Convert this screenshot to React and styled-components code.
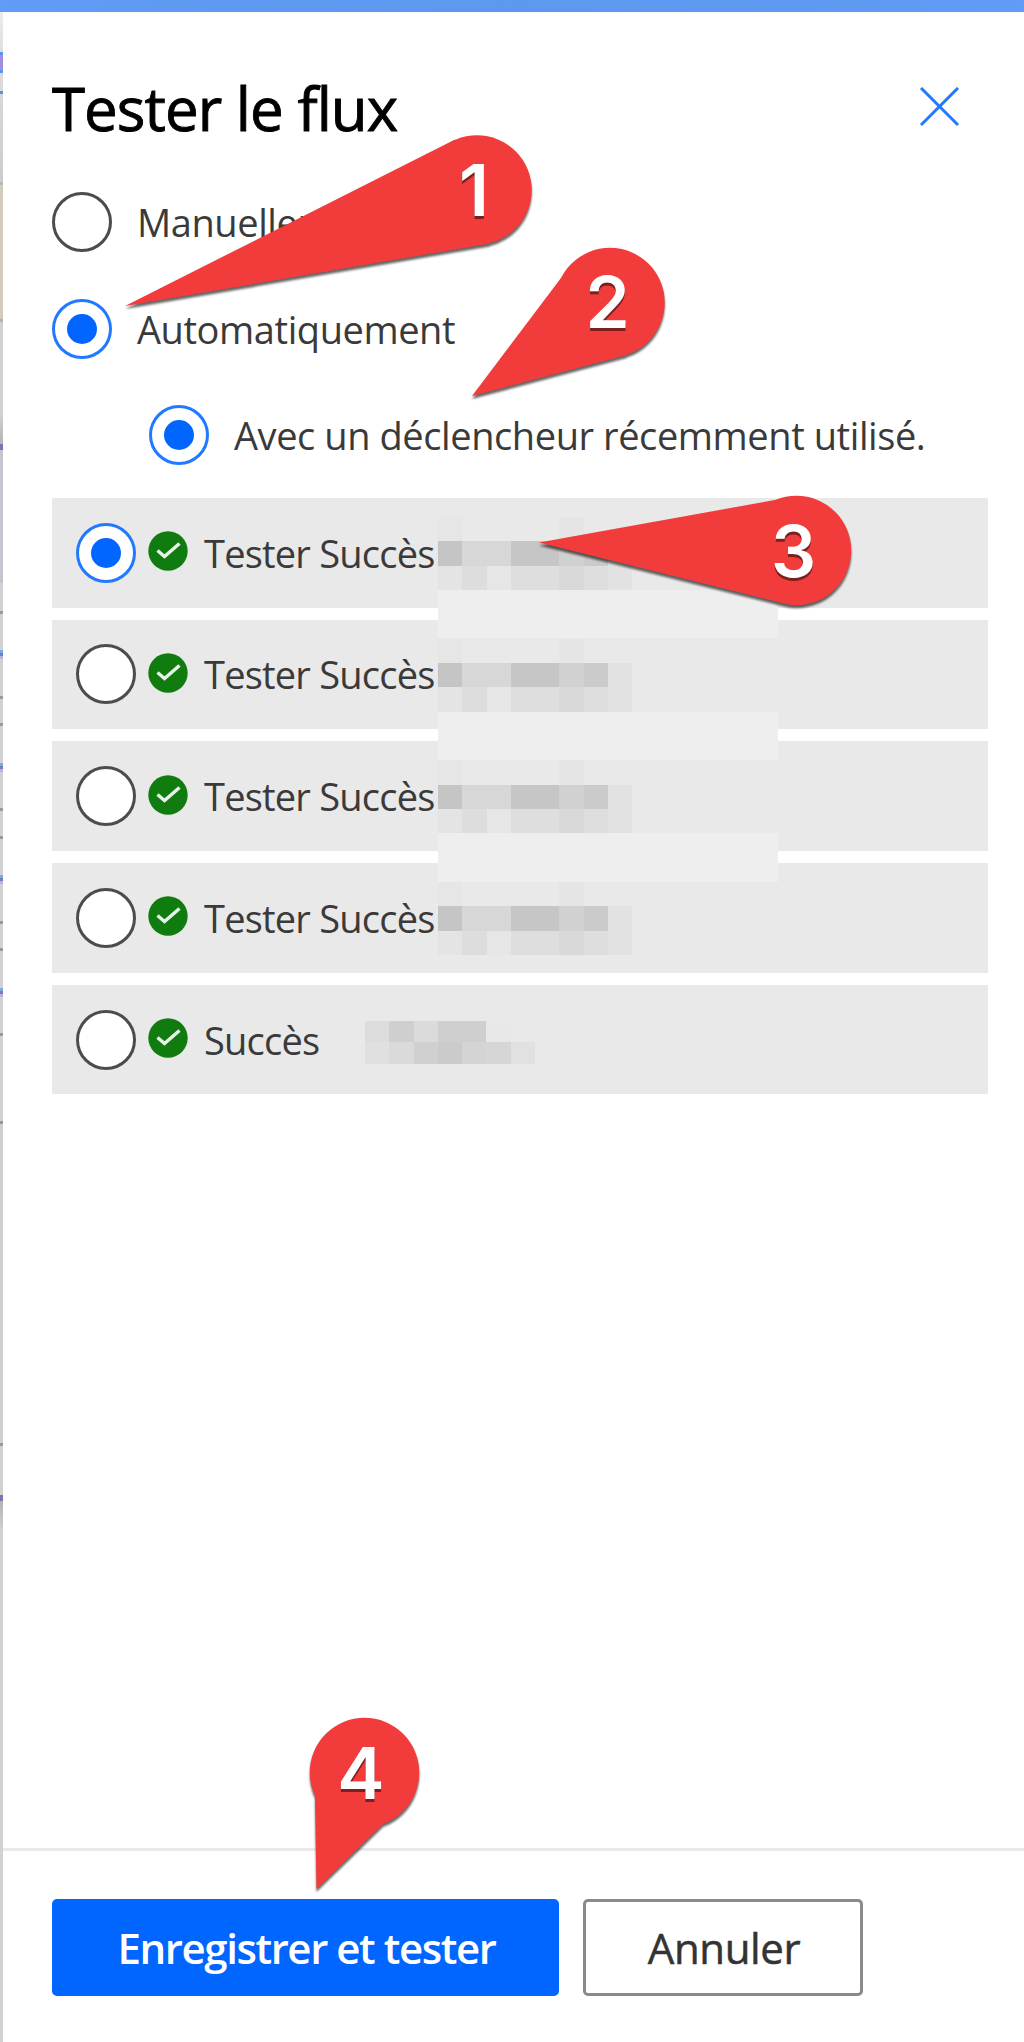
import React from 'react';
import styled, { createGlobalStyle } from 'styled-components';

const GlobalStyle = createGlobalStyle`
  *, *::before, *::after { box-sizing: border-box; }
  body {
    margin: 0;
    background: #fff;
    font-family: "Open Sans", "Noto Sans", sans-serif;
    color: #3a3a3a;
  }
`;

const Page = styled.div`
  position: relative;
  display: flex;
  flex-direction: column;
  width: 1024px;
  height: 2042px;
  overflow: hidden;
`;

const TopBar = styled.div`
  flex: none;
  height: 12px;
  background:
    radial-gradient(ellipse 62% 400% at 50% 100%, #5e97ee 0, #5f9af2 60%, #629ffa 100%);
`;

const Body = styled.div`
  flex: 1;
  display: flex;
  min-height: 0;
`;

const Canvas = styled.div`
  flex: none;
  display: flex;
  flex-direction: column;
  width: 3px;
  background: #d1d1d1;
`;

const Slice = styled.div`
  flex: none;
  height: ${(p) => p.$h}px;
  background: ${(p) => p.$bg};
`;

const Panel = styled.section`
  flex: 1;
  display: flex;
  flex-direction: column;
  min-width: 0;
  background: #fff;
`;

const Header = styled.header`
  display: flex;
  justify-content: space-between;
  align-items: flex-start;
  padding: 66px 64px 0 49px;
  height: 165px;
`;

const Title = styled.h1`
  margin: 0;
  font-size: 60px;
  line-height: 60px;
  font-weight: 500;
  letter-spacing: -0.95px;
  color: #000;
  -webkit-text-stroke: 0.9px #000;
`;

const CloseButton = styled.button`
  display: flex;
  margin: 9px 0 0;
  padding: 0;
  border: 0;
  background: none;
`;

const Content = styled.div`
  flex: 1;
  padding: 15px 36px 0 49px;
`;

const Options = styled.div`
  display: flex;
  flex-direction: column;
  gap: 46.5px;
`;

const Option = styled.label`
  display: flex;
  align-items: center;
  gap: 25px;
  height: 60px;
  margin-left: ${(p) => (p.$nested ? 97 : 0)}px;
`;

const Radio = styled.span`
  flex: none;
  display: flex;
  align-items: center;
  justify-content: center;
  width: ${(p) => (p.$size || 60)}px;
  height: ${(p) => (p.$size || 60)}px;
  border: 3px solid ${(p) => (p.$checked ? '#2079ff' : '#4c4c4c')};
  border-radius: 50%;
  background: #fff;

  &::after {
    content: '';
    display: ${(p) => (p.$checked ? 'block' : 'none')};
    width: 30px;
    height: 30px;
    border-radius: 50%;
    background: #0066ff;
  }
`;

const Label = styled.span`
  font-size: 38px;
  line-height: 60px;
  letter-spacing: ${(p) => p.$tracking || -0.42}px;
  white-space: nowrap;
`;

const RunList = styled.div`
  display: flex;
  flex-direction: column;
  gap: 12.2px;
  margin-top: 33px;
`;

const Run = styled.label`
  position: relative;
  display: flex;
  align-items: center;
  height: 109.5px;
  padding-left: 24px;
  background: #e9e9e9;
`;

const StatusIcon = styled.svg`
  flex: none;
  width: 40px;
  height: 40px;
  margin: 0 16px 3px 12px;
`;

const Redaction = styled.div`
  position: absolute;
  z-index: 1;
  left: ${(p) => p.$left}px;
  top: 19px;
`;

const MosaicGrid = styled.div`
  display: grid;
  grid-template-columns: repeat(${(p) => p.$cols}, 24.25px);
  grid-auto-rows: ${(p) => p.$rowHeight}px;
  padding-top: ${(p) => p.$offset || 0}px;
`;

const Cell = styled.span`
  background: ${(p) => p.$c};
`;

const Veil = styled.div`
  width: 340px;
  height: 48.5px;
  background: #eeeeee;
`;

const Footer = styled.footer`
  display: flex;
  gap: 24px;
  height: 194px;
  padding: 48px 49px 0;
  border-top: 3px solid #eaeaea;
`;

const Button = styled.button`
  width: ${(p) => p.$width}px;
  height: 97px;
  padding: 0;
  border: 3px solid ${(p) => (p.$primary ? '#0066ff' : '#8a8a8a')};
  border-radius: 5px;
  background: ${(p) => (p.$primary ? '#0066ff' : '#fff')};
  color: ${(p) => (p.$primary ? '#fff' : '#333')};
  font-family: inherit;
  font-size: 42px;
  line-height: 91px;
  font-weight: ${(p) => (p.$primary ? 600 : 400)};
  letter-spacing: ${(p) => (p.$primary ? -1.42 : -0.4)}px;
  -webkit-text-stroke: ${(p) => (p.$primary ? 0 : 0.5)}px;
  padding-left: 2px;
  white-space: nowrap;
`;

const Annotations = styled.svg`
  position: absolute;
  inset: 0;
  z-index: 2;
  width: 1024px;
  height: 2042px;
  pointer-events: none;
`;

const Pointer = styled.g`
  fill: #f23c3c;
  filter: drop-shadow(0 3px 1px rgba(0, 0, 0, 0.6));
`;

const Digit = styled.text`
  font-family: Inter, "Liberation Sans", sans-serif;
  font-size: 71px;
  font-weight: 600;
  text-anchor: middle;
  fill: #fff;
  filter: drop-shadow(0 3px 0 #7d1f1f);
`;

const backdrop = [
  [40, 'linear-gradient(#ececec, #dedede)'],
  [3, '#5c93e8'],
  [15, '#a08fe0'],
  [3, '#5c93e8'],
  [18, '#dadada'],
  [3, '#5c8fe0'],
  [88, 'linear-gradient(#d8d8d8, #cccccc)'],
  [3, '#b8b8b8'],
  [134, '#d3ccbd'],
  [3, '#b4b4ac'],
  [122, 'linear-gradient(#d1d1d1 75%, #b4b4b4)'],
  [6, '#7878b0'],
  [133, '#c5c5cf'],
  [28, '#d2d2d2'],
  [3, '#999'],
  [36, '#d1d1d1'],
  [3, '#7ca9dd'],
  [3, '#6b7fd0'],
  [3, '#beb2d6'],
  [37, '#d1d1d1'],
  [3, '#999'],
  [24, '#d1d1d1'],
  [3, '#999'],
  [37, '#d1d1d1'],
  [3, '#7ca9dd'],
  [3, '#6b7fd0'],
  [3, '#beb2d6'],
  [36, '#d1d1d1'],
  [3, '#999'],
  [25, '#d1d1d1'],
  [3, '#999'],
  [36, '#d1d1d1'],
  [3, '#7ca9dd'],
  [3, '#6b7fd0'],
  [3, '#beb2d6'],
  [37, '#d1d1d1'],
  [3, '#999'],
  [24, '#d1d1d1'],
  [3, '#999'],
  [37, '#d1d1d1'],
  [3, '#7ca9dd'],
  [3, '#6b7fd0'],
  [3, '#beb2d6'],
  [36, '#d1d1d1'],
  [3, '#999'],
  [85, '#d1d1d1'],
  [3, '#999'],
  [319, '#cfcfcf'],
  [3, '#999'],
  [49, '#d1d1d1'],
  [6, '#7878b0'],
  [30, 'linear-gradient(#b4b4b4, #d0d0d0)'],
];

const longMosaic = [
  ['#e6e6e6', '#e9e9e9', '#e9e9e9', '#e9e9e9', '#e9e9e9', '#e5e5e5', '#e9e9e9', '#e9e9e9'],
  ['#c5c5c5', '#d7d7d7', '#d7d7d7', '#c6c6c6', '#c6c6c6', '#d1d1d1', '#cbcbcb', '#e2e2e2'],
  ['#e4e4e4', '#dddddd', '#e6e6e6', '#dedede', '#dedede', '#d9d9d9', '#dedede', '#e2e2e2'],
];

const shortMosaic = [
  ['#dcdcdc', '#cfcfcf', '#dbdbdb', '#cfcfcf', '#cfcfcf', '#e8e8e8', '#e9e9e9'],
  ['#e0e0e0', '#dadada', '#d0d0d0', '#cbcbcb', '#d4d4d4', '#d6d6d6', '#e1e1e1'],
];

const runs = [
  { label: 'Tester Succès', checked: true, veil: true },
  { label: 'Tester Succès', veil: true },
  { label: 'Tester Succès', veil: true },
  { label: 'Tester Succès' },
  { label: 'Succès', short: true },
];

const callouts = [
  { n: 1, x: 474, y: 216, cx: 477, cy: 190, beak: '125,306 455,139.5 477,190 490,243.5' },
  { n: 2, x: 607.5, y: 328, cx: 610, cy: 302.5, beak: '472,396 561,278 610,302 627,355' },
  { n: 3, x: 793.5, y: 577, cx: 796.5, cy: 550.5, beak: '539,542.5 783,498.5 796,550 780,602.5' },
  { n: 4, x: 361, y: 1799, cx: 364.5, cy: 1772.5, beak: '316.5,1889 315,1795 364,1772 390,1820 384,1823 378,1829' },
];

function Mosaic({ short }) {
  const rows = short ? shortMosaic : longMosaic;
  return (
    <MosaicGrid $cols={rows[0].length} $rowHeight={short ? 21.5 : 24.3} $offset={short ? 17 : 0}>
      {rows.flat().map((c, i) => (
        <Cell key={i} $c={c} />
      ))}
    </MosaicGrid>
  );
}

function SuccessBadge() {
  return (
    <StatusIcon viewBox="0 0 40 40">
      <circle cx="20" cy="20" r="19.7" fill="#107c10" />
      <path d="M9.5 19.5 L16.5 25.5 L31.5 12.5" fill="none" stroke="#e9f2e9" strokeWidth="3.4" />
    </StatusIcon>
  );
}

export default function App() {
  return (
    <Page>
      <GlobalStyle />
      <TopBar />
      <Body>
        <Canvas>
          {backdrop.map(([h, bg], i) => (
            <Slice key={i} $h={h} $bg={bg} />
          ))}
        </Canvas>
        <Panel>
          <Header>
            <Title>Tester le flux</Title>
            <CloseButton aria-label="Fermer">
              <svg width="41" height="40" viewBox="0 0 41 40">
                <path d="M2 1 L39 38 M39 1 L2 38" stroke="#2079ff" strokeWidth="3" fill="none" />
              </svg>
            </CloseButton>
          </Header>
          <Content>
            <Options>
              <Option>
                <Radio />
                <Label>Manuellement</Label>
              </Option>
              <Option>
                <Radio $checked />
                <Label>Automatiquement</Label>
              </Option>
              <Option $nested>
                <Radio $checked />
                <Label>Avec un déclencheur récemment utilisé.</Label>
              </Option>
            </Options>
            <RunList>
              {runs.map((run, i) => (
                <Run key={i}>
                  <Radio $checked={run.checked} $size={60} />
                  <SuccessBadge />
                  <Label $tracking={-0.78}>{run.label}</Label>
                  <Redaction $left={run.short ? 313 : 386}>
                    <Mosaic short={run.short} />
                    {run.veil && <Veil />}
                  </Redaction>
                </Run>
              ))}
            </RunList>
          </Content>
          <Footer>
            <Button $primary $width={507}>Enregistrer et tester</Button>
            <Button $width={280}>Annuler</Button>
          </Footer>
        </Panel>
      </Body>
      <Annotations viewBox="0 0 1024 2042">
        {callouts.map((c) => (
          <g key={c.n}>
            <Pointer>
              <polygon points={c.beak} />
              <circle cx={c.cx} cy={c.cy} r="54.7" />
            </Pointer>
            <Digit x={c.x} y={c.y}>{c.n}</Digit>
          </g>
        ))}
      </Annotations>
    </Page>
  );
}
